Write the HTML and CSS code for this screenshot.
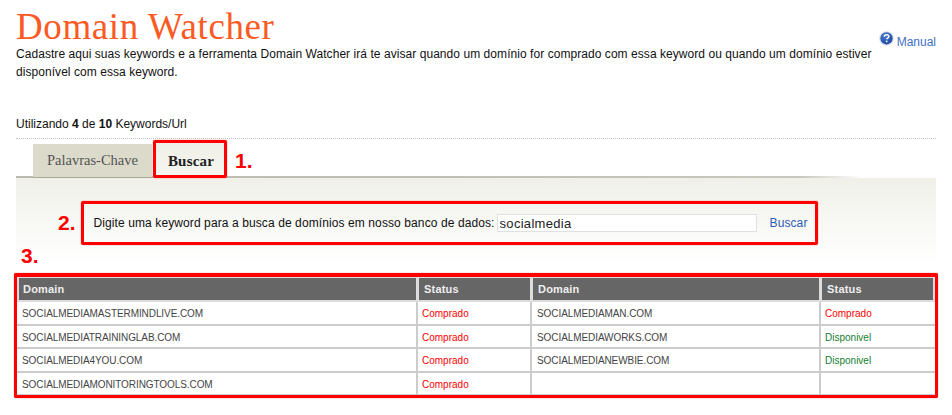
FILE: index.html
```html
<!DOCTYPE html>
<html lang="pt">
<head>
<meta charset="utf-8">
<title>Domain Watcher</title>
<link rel="stylesheet" href="styles.css">
</head>
<body>
<div class="page">
  <header class="head">
    <div class="intro">
      <h1 class="title">Domain Watcher</h1>
      <p class="desc">Cadastre aqui suas keywords e a ferramenta Domain Watcher irá te avisar quando um domínio for comprado com essa keyword ou quando um domínio estiver disponível com essa keyword.</p>
    </div>
    <a class="manual" href="#">
      <svg class="help" viewBox="0 0 14 14" width="15" height="15" aria-hidden="true">
        <defs><radialGradient id="hg" cx="0.4" cy="0.3" r="0.8"><stop offset="0" stop-color="#4f7fd6"/><stop offset="1" stop-color="#123f98"/></radialGradient></defs>
        <circle cx="7" cy="7" r="6.8" fill="#d5dbe6"/>
        <circle cx="7" cy="6.8" r="5.7" fill="url(#hg)"/>
        <path d="M4.9 5.3c.1-1.3 1-1.9 2.2-1.9 1.3 0 2.1.7 2.1 1.7 0 .8-.5 1.2-1.1 1.6-.5.3-.7.6-.7 1.1" fill="none" stroke="#fff" stroke-width="1.4"/>
        <rect x="6.4" y="9" width="1.5" height="1.5" fill="#fff"/>
      </svg>
      <span>Manual</span>
    </a>
  </header>
  <p class="usage">Utilizando <b>4</b> de <b>10</b> Keywords/Url</p>
  <nav class="tabs">
    <a class="tab" href="#">Palavras-Chave</a>
    <a class="tab tab-active" href="#">Buscar</a>
    <span class="num num-tab">1.</span>
  </nav>
  <section class="panel">
    <div class="search-row">
      <span class="num">2.</span>
      <form class="search">
        <label class="search-label" for="kw">Digite uma keyword para a busca de domínios em nosso banco de dados:</label>
        <input class="search-input" id="kw" type="text" value="socialmedia">
        <a class="search-link" href="#">Buscar</a>
      </form>
    </div>
    <span class="num num-table">3.</span>
    <div class="results">
      <table class="grid">
        <colgroup><col class="c-dom1"><col class="c-st"><col class="c-dom2"><col class="c-st2"></colgroup>
        <thead><tr><th>Domain</th><th>Status</th><th>Domain</th><th>Status</th></tr></thead>
        <tbody>
          <tr><td class="dom">SOCIALMEDIAMASTERMINDLIVE.COM</td><td class="bought">Comprado</td><td class="dom">SOCIALMEDIAMAN.COM</td><td class="bought">Comprado</td></tr>
          <tr><td class="dom">SOCIALMEDIATRAININGLAB.COM</td><td class="bought">Comprado</td><td class="dom">SOCIALMEDIAWORKS.COM</td><td class="free">Disponivel</td></tr>
          <tr><td class="dom">SOCIALMEDIA4YOU.COM</td><td class="bought">Comprado</td><td class="dom">SOCIALMEDIANEWBIE.COM</td><td class="free">Disponivel</td></tr>
          <tr><td class="dom">SOCIALMEDIAMONITORINGTOOLS.COM</td><td class="bought">Comprado</td><td class="dom"></td><td></td></tr>
        </tbody>
      </table>
    </div>
  </section>
</div>
</body>
</html>
```
FILE: styles.css
```css
* { box-sizing: border-box; }
html, body { margin: 0; padding: 0; background: #fff; }
body { font-family: "Liberation Sans", Arial, sans-serif; font-size: 12px; color: #111; overflow: hidden; }
.page { width: 952px; height: 415px; padding: 0 16px; }

.head { display: flex; justify-content: space-between; align-items: flex-start; height: 80px; }
.intro { width: 860px; }
.title { margin: 0; padding-top: 9px; height: 45px; font: normal 37px/36px "Liberation Serif", Georgia, serif; letter-spacing: 0.6px; color: #fb5a25; }
.desc { margin: 0; font-size: 12px; line-height: 18px; letter-spacing: 0.055px; }
.manual { display: flex; align-items: center; gap: 3px; margin: 34px 0 0 0; color: #3f6fc4; text-decoration: none; font-size: 12px; }
.help { position: relative; top: -3px; }

.usage { margin: 0; padding-top: 37px; height: 59px; border-bottom: 1px dotted #c4c4c4; line-height: 15px; }

.tabs { display: flex; align-items: flex-end; height: 39px; padding-left: 17px; position: relative; z-index: 1; }
.tab { display: block; width: 119px; height: 34px; background: #dcdaca; border-bottom: 1px solid #aaa998; text-align: center; font: 14.5px/32px "Liberation Serif", Georgia, serif; color: #555; text-decoration: none; }
.tab-active { width: 74px; height: 38px; margin-left: 1px; padding-left: 2px; border: 3px solid #f00; border-radius: 2px; box-shadow: 0 0 1px #f00; background: linear-gradient(#efeee6, #f6f6f1); font-size: 15px; font-weight: bold; letter-spacing: 0.2px; color: #222; line-height: 36px; }
.num { font-size: 21px; line-height: 22px; font-weight: bold; color: #f00; }
.num-tab { margin: 0 0 6px 8px; }

.panel { height: 96px; position: relative; background: linear-gradient(#f0f0e9, #fff 90%); }
.panel::before { content: ""; display: block; position: absolute; left: 0; right: 0; top: -2px; height: 2px; background: linear-gradient(to right, #b9b9ad, #c6c6bc 85%, rgba(255,255,255,0) 92%); }

.search-row { display: flex; align-items: center; padding: 23px 0 0 42px; gap: 5px; }
.search { display: flex; align-items: center; width: 737px; height: 44px; padding-left: 10px; border: 3px solid #f00; border-radius: 2px; box-shadow: 0 0 1px #f00; }
.search-label { white-space: nowrap; font-size: 12px; letter-spacing: 0.1px; }
.search-input { width: 260px; height: 18px; margin-left: 2px; padding: 0 2px; border: 1px solid #dfe0e4; background: #fff; font: 13px "Liberation Sans", Arial, sans-serif; letter-spacing: 0.3px; color: #222; }
.search-link { margin-left: 13px; color: #2a5bb5; text-decoration: none; letter-spacing: 0.1px; }

.num-table { display: block; position: absolute; left: 5px; top: 67px; }
.results { position: absolute; left: -2px; top: 95px; width: 924px; height: 125px; border: 3px solid #f00; border-top-width: 4px; border-radius: 2px; box-shadow: 0 0 1px #f00; background: #fff; overflow: hidden; }

.grid { width: 918px; border-collapse: separate; border-spacing: 0; table-layout: fixed; font-size: 10px; }
.c-dom1 { width: 402px; }
.c-st { width: 114px; }
.c-dom2 { width: 289px; }
.c-st2 { width: 113px; }
.grid th { height: 25px; padding: 0 0 0 5px; background: #666; border-top: 1px solid #ddd; border-bottom: 2px solid #ddd; border-right: 3px solid #ddd; text-align: left; color: #eee; font-size: 11px; letter-spacing: 0.2px; }
.grid th:first-child { padding-left: 4px; border-left: 2px solid #ddd; }
.grid th:last-child { border-right-width: 2px; }
.grid td { height: 23.5px; padding: 2px 0 0 3px; border-bottom: 2px solid #ccc; background: linear-gradient(to left, #fff 1px, #ccc 1px, #ccc 3px, #fff 3px); color: #444; }
.grid td:last-child { background: #fff; }
.grid td.dom { padding-left: 4px; letter-spacing: -0.08px; }
.grid td:first-child { padding-left: 5px; }
.grid .bought { color: #f00; }
.grid .free { color: #12812f; }
```
